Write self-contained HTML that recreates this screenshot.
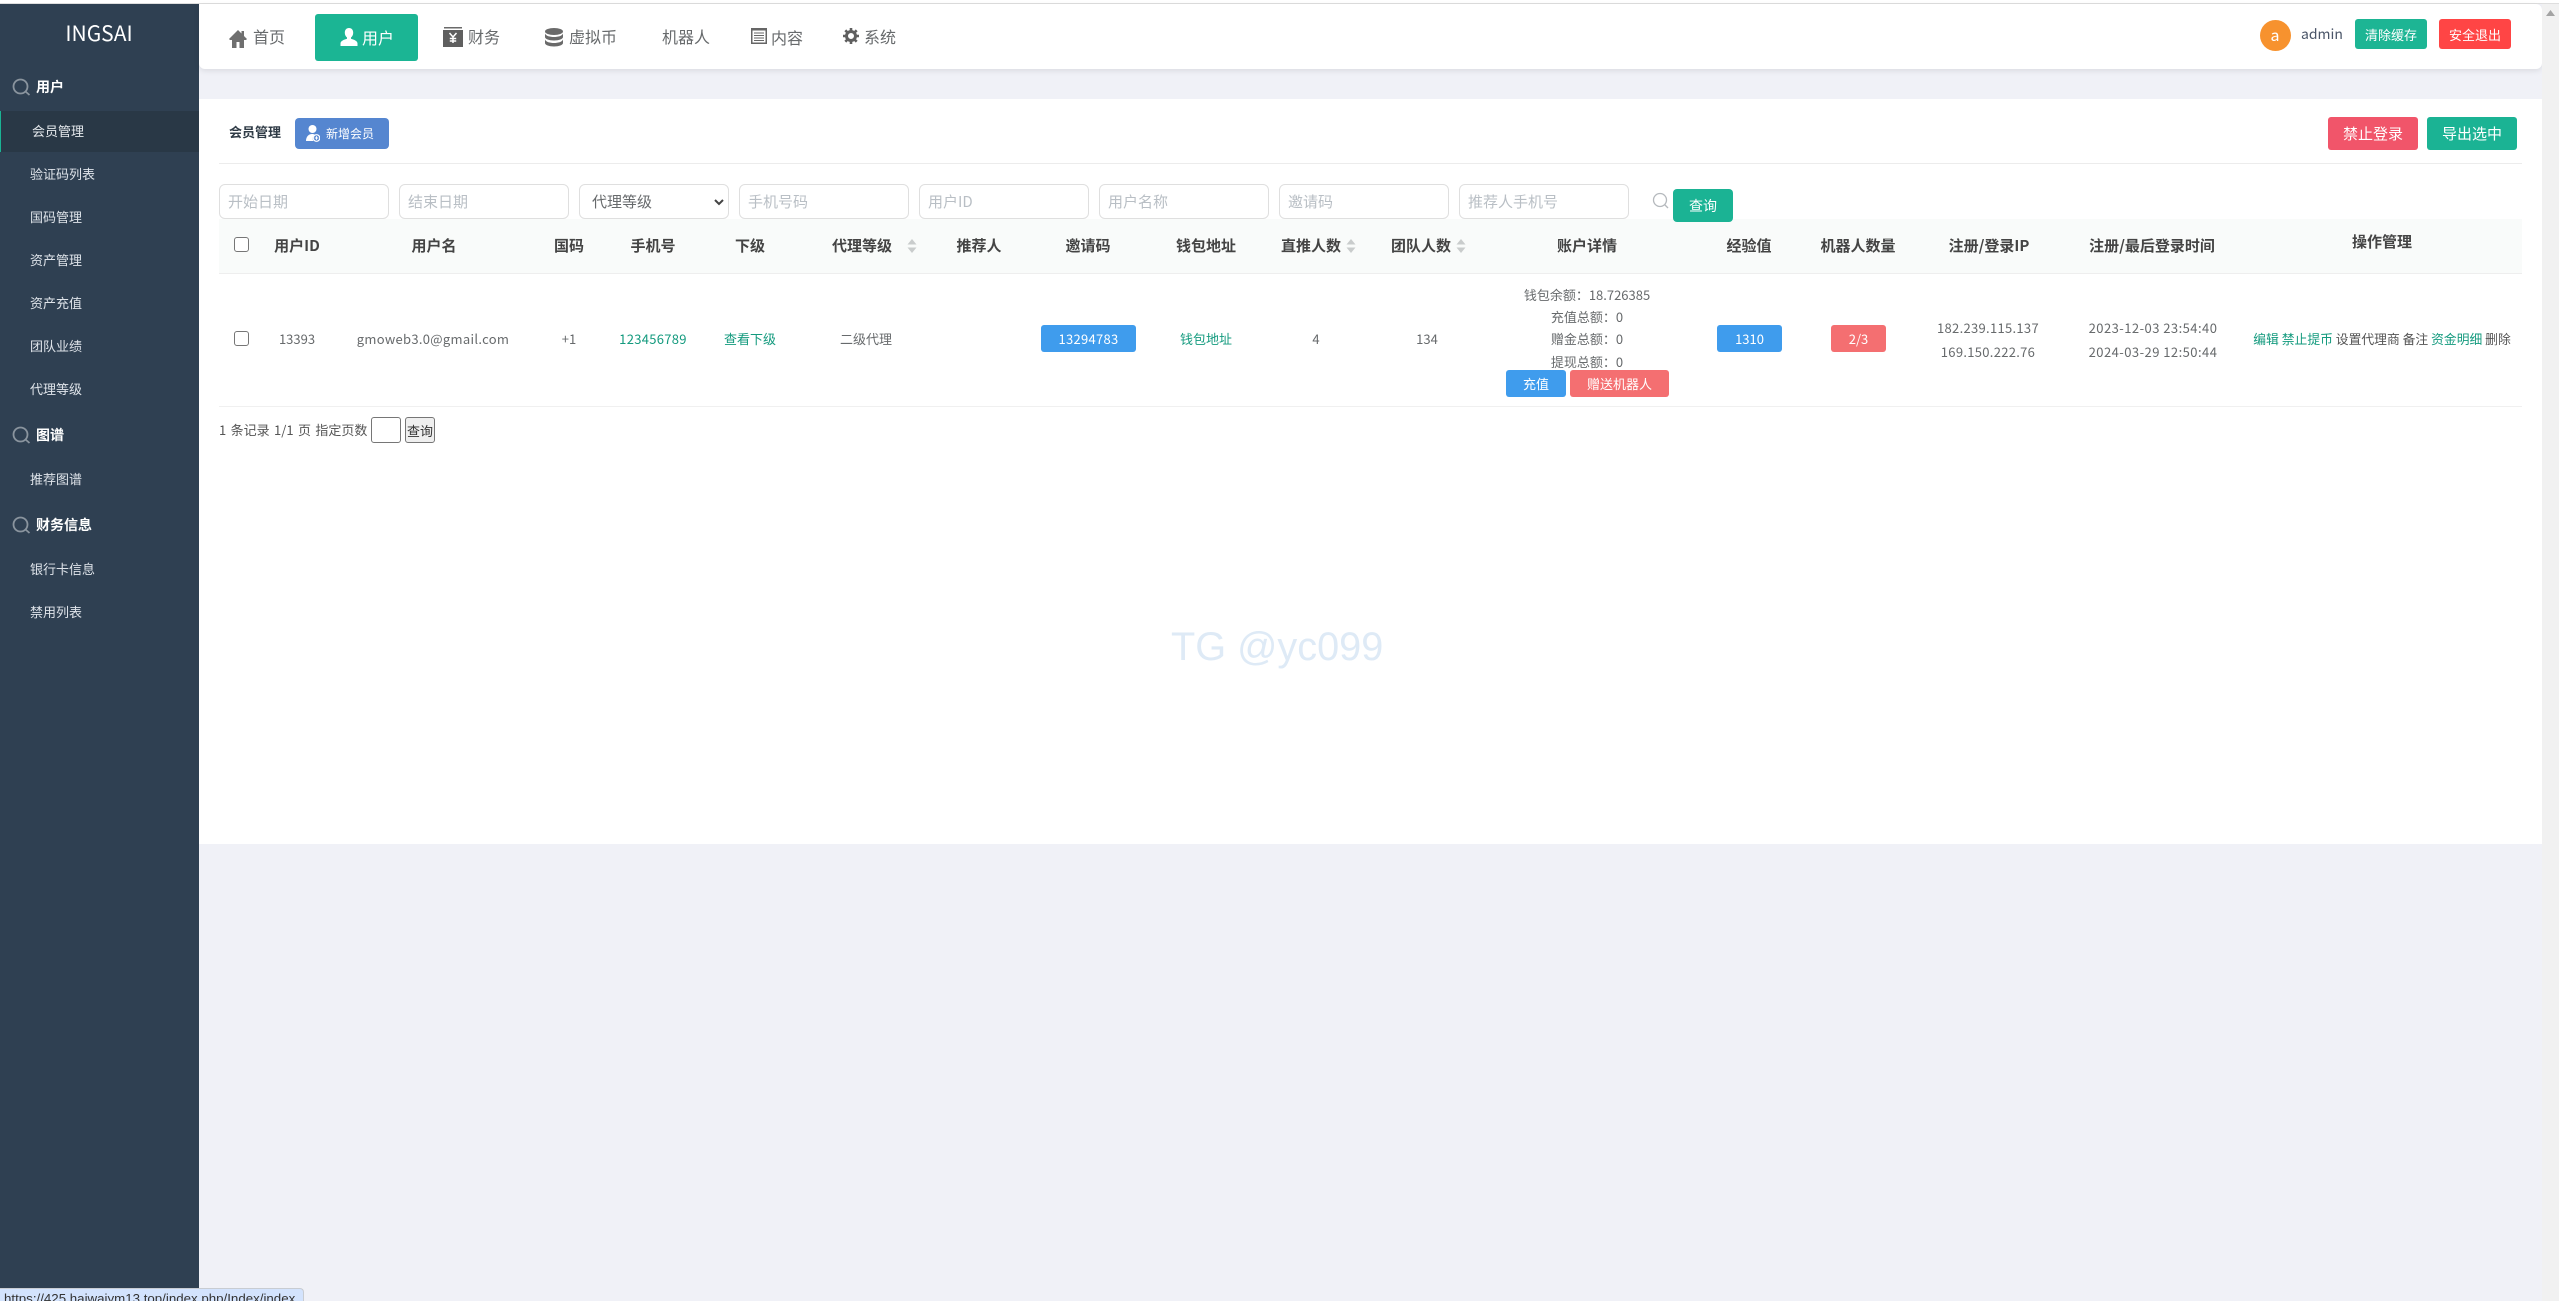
<!DOCTYPE html>
<html lang="zh-CN">
<head>
<meta charset="utf-8">
<title>INGSAI</title>
<style>
html,body{margin:0;padding:0;width:2559px;height:1301px;overflow:hidden;background:#f0f1f7;font-family:"Liberation Sans","Noto Sans CJK SC",sans-serif;color:#676a6c}
*{box-sizing:border-box}
.a{position:absolute}
.t{position:absolute;white-space:nowrap;line-height:20px;height:20px;font-size:13px;font-family:"Noto Sans CJK SC","Liberation Sans",sans-serif}
.c{transform:translateX(-50%)}
.box{position:absolute;display:flex;align-items:center;justify-content:center;white-space:nowrap;color:#fff;border-radius:3px;font-family:"Noto Sans CJK SC","Liberation Sans",sans-serif}
.side{color:#dfe4ea;left:30px}
.sec{color:#fff;left:36px;font-size:14px;font-weight:700}
.nav{font-size:16px;color:#676a6c}
.ph{position:absolute;top:184px;height:35px;width:170px;background:#fff;border:1px solid #dfdfdf;border-radius:6px;font:15px/33px "Noto Sans CJK SC","Liberation Sans",sans-serif;color:#b9bfc5;padding-left:8px;white-space:nowrap}
.th{font-size:15px;font-weight:700;color:#444;top:236px}
.td{color:#676a6c;top:329px}
.g{color:#139a7e}
.ls{letter-spacing:.3px}
.cb{position:absolute;left:234px;width:15px;height:15px;border:1px solid #767676;border-radius:3px;background:#fff}
.sort{position:absolute;top:238px;width:10px;height:16px}
</style>
</head>
<body>
<!-- top strip -->
<div class="a" style="left:0;top:0;width:2559px;height:3px;background:#fff"></div>
<div class="a" style="left:0;top:3px;width:2559px;height:1px;background:#dedede"></div>

<!-- sidebar -->
<div class="a" style="left:0;top:4px;width:199px;height:1297px;background:#2f4052"></div>
<div class="t c" style="left:99px;top:23px;font-size:21px;color:#fff">INGSAI</div>

<svg class="a" style="left:12px;top:78px" width="19" height="19" viewBox="0 0 19 19" fill="none" stroke="#8a949e" stroke-width="1.8"><circle cx="8.5" cy="8.5" r="7"/><path d="M13.5 13.5l4 3.5"/></svg>
<div class="t sec" style="top:77px">用户</div>
<div class="a" style="left:0;top:111px;width:199px;height:41px;background:#293846;border-left:1px solid #1ab394"></div>
<div class="t" style="left:32px;top:121px;color:#e4e8ec">会员管理</div>
<div class="t side" style="top:164px">验证码列表</div>
<div class="t side" style="top:207px">国码管理</div>
<div class="t side" style="top:250px">资产管理</div>
<div class="t side" style="top:293px">资产充值</div>
<div class="t side" style="top:336px">团队业绩</div>
<div class="t side" style="top:379px">代理等级</div>
<svg class="a" style="left:12px;top:426px" width="19" height="19" viewBox="0 0 19 19" fill="none" stroke="#8a949e" stroke-width="1.8"><circle cx="8.5" cy="8.5" r="7"/><path d="M13.5 13.5l4 3.5"/></svg>
<div class="t sec" style="top:425px">图谱</div>
<div class="t side" style="top:469px">推荐图谱</div>
<svg class="a" style="left:12px;top:516px" width="19" height="19" viewBox="0 0 19 19" fill="none" stroke="#8a949e" stroke-width="1.8"><circle cx="8.5" cy="8.5" r="7"/><path d="M13.5 13.5l4 3.5"/></svg>
<div class="t sec" style="top:515px">财务信息</div>
<div class="t side" style="top:559px">银行卡信息</div>
<div class="t side" style="top:602px">禁用列表</div>

<!-- header -->
<div class="a" style="left:199px;top:4px;width:2343px;height:65px;background:#fff;border-radius:0 6px 6px 6px;box-shadow:0 2px 6px rgba(0,0,0,.09)"></div>

<svg class="a" style="left:229px;top:29px" width="18" height="19" viewBox="0 0 18 19" fill="#6f6f6f"><path d="M9 1L0 10l1 1h2v8h4.500v-6h3v6H15v-8h2l1-1-3-3V2h-2.500v2.500z"/></svg>
<div class="t nav" style="left:253px;top:26px">首页</div>

<div class="a" style="left:315px;top:14px;width:103px;height:47px;background:#1bb594;border-radius:3px"></div>
<svg class="a" style="left:340px;top:28px" width="18" height="18" viewBox="0 0 18 18" fill="#fff"><path d="M9 0c2.700 0 4.200 2 4.200 4.800 0 2-.9 3.700-2.200 4.700v1.300c2.800.8 6.500 2.200 6.500 4.600V18H.5v-2.600c0-2.400 3.700-3.800 6.500-4.600V9.500C5.700 8.500 4.800 6.800 4.800 4.800 4.800 2 6.300 0 9 0z"/></svg>
<div class="t nav" style="left:362px;top:27px;color:#fff">用户</div>

<svg class="a" style="left:443px;top:27px" width="20" height="20" viewBox="0 0 20 20"><rect x="1" y="0" width="18" height="1.500" fill="#6a6a6a"/><rect x="0" y="3" width="20" height="17" fill="#5f5f5f"/><path d="M6.500 6l3.500 4 3.500-4M10 10v6M6.800 11.500h6.400M6.800 14h6.400" fill="none" stroke="#fff" stroke-width="1.500"/></svg>
<div class="t nav" style="left:468px;top:26px">财务</div>

<svg class="a" style="left:545px;top:28px" width="18" height="19" viewBox="0 0 18 19" fill="#6a6a6a"><ellipse cx="9" cy="3.500" rx="9" ry="3.500"/><path d="M0 5.500C1 8 5 9 9 9s8-1 9-3.500V9c0 2-4 3.500-9 3.500S0 11 0 9z"/><path d="M0 11.500C1 14 5 15 9 15s8-1 9-3.500V15c0 2-4 3.500-9 3.500S0 17 0 15z"/></svg>
<div class="t nav" style="left:569px;top:26px">虚拟币</div>

<div class="t nav" style="left:662px;top:26px">机器人</div>

<svg class="a" style="left:751px;top:28px" width="16" height="16" viewBox="0 0 16 16"><rect x=".75" y=".75" width="14.500" height="14.500" fill="none" stroke="#666" stroke-width="1.500"/><rect x="0" y="0" width="16" height="2.500" fill="#666"/><path d="M3 5h10M3 7.500h10M3 10h10M3 12.500h10" stroke="#666" stroke-width="1"/></svg>
<div class="t nav" style="left:771px;top:27px">内容</div>

<svg class="a" style="left:843px;top:28px" width="16" height="16" viewBox="0 0 16 16"><circle cx="8" cy="8" r="4.500" fill="none" stroke="#5f5f5f" stroke-width="3"/><path d="M8 0v3M8 13v3M0 8h3M13 8h3M2.300 2.300l2.200 2.200M11.500 11.500l2.200 2.200M2.300 13.700l2.200-2.200M11.500 4.500l2.200-2.200" stroke="#5f5f5f" stroke-width="2.600"/></svg>
<div class="t nav" style="left:864px;top:26px">系统</div>

<div class="a" style="left:2260px;top:20px;width:31px;height:31px;border-radius:50%;background:#f7922e"></div>
<div class="t c" style="left:2275px;top:24px;font-size:16px;color:#fff">a</div>
<div class="t" style="left:2301px;top:24px;font-size:14px;color:#4a5568">admin</div>
<div class="box" style="left:2355px;top:19px;width:72px;height:30px;background:#1db594;font-size:13px">清除缓存</div>
<div class="box" style="left:2439px;top:19px;width:72px;height:30px;background:#ff4545;font-size:13px">安全退出</div>

<!-- content -->
<div class="a" style="left:199px;top:99px;width:2343px;height:745px;background:#fff"></div>
<div class="t" style="left:229px;top:122px;font-weight:700;color:#2f3b46">会员管理</div>
<div class="box" style="left:295px;top:118px;width:94px;height:31px;background:#5586d0;font-size:12px;padding-left:16px;border-radius:4px">新增会员</div>
<svg class="a" style="left:306px;top:125px" width="14" height="17" viewBox="0 0 14 17" fill="#fff"><circle cx="6.500" cy="4" r="4"/><path d="M0 16c0-4 2.500-7 6-7 1 0 2 .2 2.800.6A4.500 4.500 0 0 0 7.500 16z"/><circle cx="10.500" cy="13" r="3.300" fill="none" stroke="#fff" stroke-width="1.200"/><path d="M10.500 11.200v3.600M8.700 13h3.600" stroke="#fff" stroke-width="1"/></svg>
<div class="box" style="left:2328px;top:117px;width:90px;height:33px;background:#f1556a;font-size:15px">禁止登录</div>
<div class="box" style="left:2427px;top:117px;width:90px;height:33px;background:#1bb394;font-size:15px">导出选中</div>
<div class="a" style="left:219px;top:163px;width:2303px;height:1px;background:#ececec"></div>

<!-- filters -->
<div class="ph" style="left:219px">开始日期</div>
<div class="ph" style="left:399px">结束日期</div>
<div class="ph" style="left:579px;width:150px;color:#676a6c;padding-left:12px">代理等级</div>
<svg class="a" style="left:714px;top:199px" width="10" height="7" viewBox="0 0 10 7" fill="none" stroke="#444" stroke-width="2"><path d="M1 1l4 4 4-4"/></svg>
<div class="ph" style="left:739px">手机号码</div>
<div class="ph" style="left:919px">用户ID</div>
<div class="ph" style="left:1099px">用户名称</div>
<div class="ph" style="left:1279px">邀请码</div>
<div class="ph" style="left:1459px">推荐人手机号</div>
<svg class="a" style="left:1652px;top:192px" width="18" height="18" viewBox="0 0 18 18" fill="none" stroke="#b5b9bd" stroke-width="1.300"><circle cx="8" cy="8" r="6.500"/><path d="M12.500 12.500l3.500 3.500"/></svg>

<!-- table -->
<div class="a" style="left:219px;top:219px;width:2303px;height:54px;background:#f9fbfa"></div>
<div class="a" style="left:219px;top:273px;width:2303px;height:1px;background:#eeeeee"></div>
<div class="a" style="left:219px;top:406px;width:2303px;height:1px;background:#f0f0f0"></div>
<div class="box" style="left:1673px;top:189px;width:60px;height:33px;background:#1bb394;font-size:14px;border-radius:4px">查询</div>

<div class="cb" style="top:237px"></div>
<div class="t c th" style="left:297px">用户ID</div>
<div class="t c th" style="left:434px">用户名</div>
<div class="t c th" style="left:569px">国码</div>
<div class="t c th" style="left:653px">手机号</div>
<div class="t c th" style="left:750px">下级</div>
<div class="t c th" style="left:862px">代理等级</div>
<div class="t c th" style="left:979px">推荐人</div>
<div class="t c th" style="left:1088px">邀请码</div>
<div class="t c th" style="left:1206px">钱包地址</div>
<div class="t c th" style="left:1311px">直推人数</div>
<div class="t c th" style="left:1421px">团队人数</div>
<div class="t c th" style="left:1587px">账户详情</div>
<div class="t c th" style="left:1749px">经验值</div>
<div class="t c th" style="left:1858px">机器人数量</div>
<div class="t c th" style="left:1989px">注册/登录IP</div>
<div class="t c th" style="left:2152px">注册/最后登录时间</div>
<div class="t c th" style="left:2382px;top:232px">操作管理</div>

<svg class="sort" style="left:907px" viewBox="0 0 10 16" fill="#c9cccc"><path d="M5 1l4.500 5.500H.5zM.5 9.500h9L5 15z"/></svg>
<svg class="sort" style="left:1346px" viewBox="0 0 10 16" fill="#c9cccc"><path d="M5 1l4.500 5.500H.5zM.5 9.500h9L5 15z"/></svg>
<svg class="sort" style="left:1456px" viewBox="0 0 10 16" fill="#c9cccc"><path d="M5 1l4.500 5.500H.5zM.5 9.500h9L5 15z"/></svg>

<div class="cb" style="top:331px"></div>
<div class="t c td" style="left:297px">13393</div>
<div class="t c td ls" style="left:433px">gmoweb3.0@gmail.com</div>
<div class="t c td" style="left:569px">+1</div>
<div class="t c td g ls" style="left:653px">123456789</div>
<div class="t c td g" style="left:750px">查看下级</div>
<div class="t c td" style="left:866px">二级代理</div>
<div class="box ls" style="left:1041px;top:325px;width:95px;height:27px;background:#3f9ced;font-size:13px">13294783</div>
<div class="t c td g" style="left:1206px">钱包地址</div>
<div class="t c td" style="left:1316px">4</div>
<div class="t c td" style="left:1427px">134</div>
<div class="t c" style="left:1587px;top:285px">钱包余额：18.726385</div>
<div class="t c" style="left:1587px;top:307px">充值总额：0</div>
<div class="t c" style="left:1587px;top:329px">赠金总额：0</div>
<div class="t c" style="left:1587px;top:352px">提现总额：0</div>
<div class="box" style="left:1506px;top:370px;width:60px;height:27px;background:#3f9ced;font-size:13px">充值</div>
<div class="box" style="left:1570px;top:370px;width:99px;height:27px;background:#f46f71;font-size:13px">赠送机器人</div>
<div class="box" style="left:1717px;top:325px;width:65px;height:27px;background:#3f9ced;font-size:13px">1310</div>
<div class="box" style="left:1831px;top:325px;width:55px;height:27px;background:#f46f71;font-size:13px">2/3</div>
<div class="t c ls" style="left:1988px;top:318px">182.239.115.137</div>
<div class="t c ls" style="left:1988px;top:342px">169.150.222.76</div>
<div class="t c" style="left:2153px;top:318px;letter-spacing:.45px">2023-12-03 23:54:40</div>
<div class="t c" style="left:2153px;top:342px;letter-spacing:.45px">2024-03-29 12:50:44</div>
<div class="t c td" style="left:2382px;color:#555;font-size:12.800px"><span class="g">编辑</span> <span class="g">禁止提币</span> 设置代理商 备注 <span class="g">资金明细</span> 删除</div>

<!-- pagination -->
<div class="t" style="left:219px;top:420px;color:#555;word-spacing:1.500px">1 条记录 1/1 页 指定页数</div>
<div class="a" style="left:371px;top:417px;width:30px;height:26px;background:#fff;border:1px solid #767676;border-radius:3px"></div>
<div class="box" style="left:405px;top:417px;width:30px;height:26px;background:#efefef;border:1px solid #767676;color:#333;font-size:13px">查询</div>

<!-- watermark -->
<div class="a" style="left:1171px;top:622px;font:39.700px/50px 'Liberation Sans',sans-serif;color:#deeaf6;white-space:nowrap">TG @yc099</div>

<!-- scrollbar -->
<div class="a" style="left:2542px;top:4px;width:17px;height:1297px;background:#f1f1f1"></div>
<svg class="a" style="left:2546px;top:10px" width="9" height="6" viewBox="0 0 9 6" fill="#a3a3a3"><path d="M4.500 0L9 6H0z"/></svg>

<!-- status bar -->
<div class="a" style="left:0;top:1288px;width:304px;height:13px;background:#d3e3fd;border-top:1px solid #c8ccd2;border-right:1px solid #c8ccd2;border-radius:0 4px 0 0;overflow:hidden">
<div style="position:absolute;left:4px;top:0;font:13.300px/20px 'Liberation Sans',sans-serif;color:#333;white-space:nowrap">https://425.haiwaiym13.top/index.php/Index/index</div>
</div>
</body>
</html>
